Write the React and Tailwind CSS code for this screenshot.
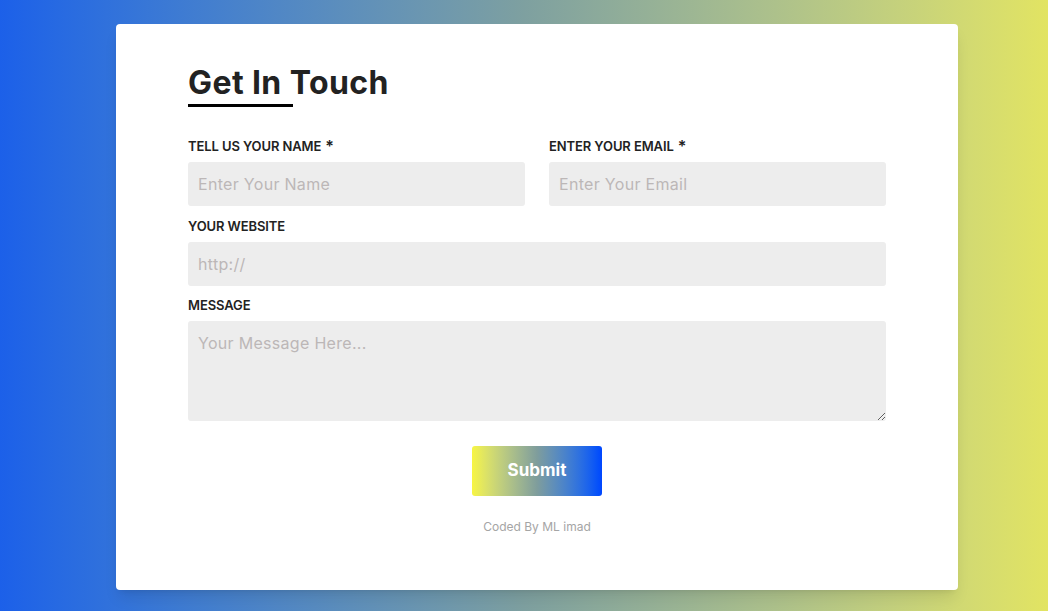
import React, { useState } from 'react';

const font = { fontFamily: '"Inter", "Noto Sans", sans-serif' };

function Label({ children, required }) {
  return (
    <label className="block text-[13px] leading-5 font-semibold uppercase text-[#222] mb-1.5 tracking-[-0.1px]">
      {children}
      {required && <span className="ml-1 text-[16px] align-top">*</span>}
    </label>
  );
}

export default function App() {
  const [form, setForm] = useState({ name: '', email: '', website: '', message: '' });

  const update = (key) => (e) => setForm({ ...form, [key]: e.target.value });

  const inputClass =
    'w-full h-11 px-2.5 text-[16px] tracking-[0.3px] bg-[#ededed] rounded-[3px] text-[#333] placeholder-[#bcb7b7] outline-none';

  return (
    <div
      style={font}
      className="min-h-[611px] w-full bg-gradient-to-r from-[#1c60e9] via-[#7ea0a0] to-[#e2e462] flex justify-start pl-[116px] pt-6 pb-[21px]"
    >
      <div className="w-[842px] bg-white rounded-[4px] shadow-lg px-[72px] pt-[40px] pb-[50px]">
        {/* Heading */}
        <h1 className="text-[32px] leading-[38px] font-bold text-[#222] tracking-[0.4px]">Get In Touch</h1>
        <div className="w-[105px] h-[3px] bg-black mt-[2px] mb-[29px]"></div>

        <form onSubmit={(e) => e.preventDefault()}>
          <div className="grid grid-cols-2 gap-6">
            <div>
              <Label required>Tell us your name</Label>
              <input className={inputClass} placeholder="Enter Your Name" value={form.name} onChange={update('name')} />
            </div>
            <div>
              <Label required>Enter your email</Label>
              <input className={inputClass} placeholder="Enter Your Email" value={form.email} onChange={update('email')} />
            </div>
          </div>

          <div className="mt-[10px]">
            <Label>Your website</Label>
            <input className={inputClass} placeholder="http://" value={form.website} onChange={update('website')} />
          </div>

          <div className="mt-[9px]">
            <Label>Message</Label>
            <textarea
              className="w-full h-[100px] block px-2.5 py-2.5 text-[16px] tracking-[0.3px] bg-[#ededed] rounded-[3px] text-[#333] placeholder-[#bcb7b7] outline-none"
              placeholder="Your Message Here..."
              value={form.message}
              onChange={update('message')}
            />
          </div>

          <div className="flex justify-center mt-[25px]">
            <button
              type="submit"
              className="w-[130px] h-[50px] rounded-[3px] bg-gradient-to-r from-[#f7f541] via-[#7f9d9c] to-[#0046ff] text-white font-bold text-[17px]"
            >
              Submit
            </button>
          </div>
        </form>

        <p className="text-center text-[12px] leading-[18px] text-[#a5a5a5] mt-[22px]">Coded By ML imad</p>
      </div>
    </div>
  );
}
